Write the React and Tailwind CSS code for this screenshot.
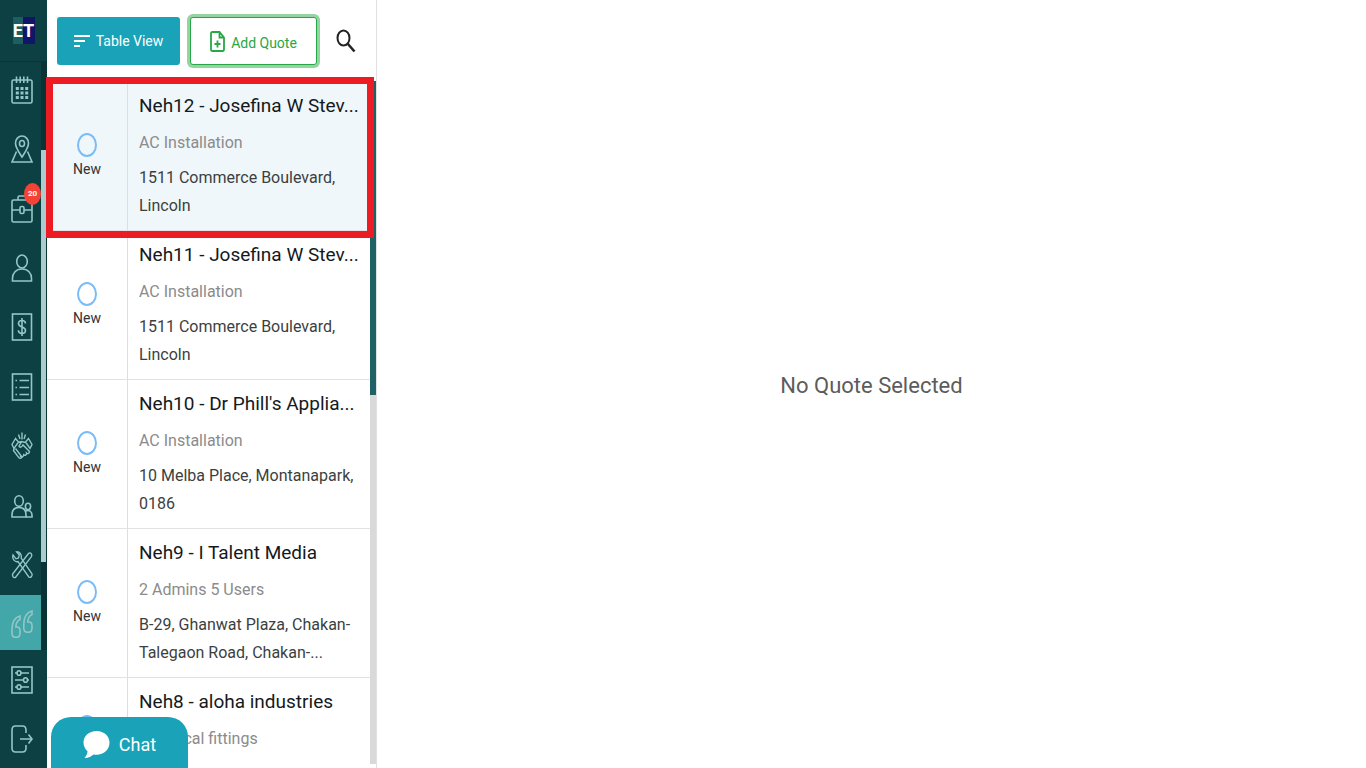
import React from "react";

const stroke = { fill: "none", stroke: "currentColor", strokeWidth: 1.6 };

function Icon({ children }) {
  return (
    <svg className="h-7 w-[22px]" viewBox="0 0 22 28" aria-hidden="true" {...stroke}>
      {children}
    </svg>
  );
}

const navItems = [
  {
    label: "Calendar",
    icon: (
      <Icon>
        <rect x="1" y="4" width="20" height="23" rx="1.5" />
        <path d="M5.5 0.500v6.500M9.200 0.500v6.500M12.800 0.500v6.500M16.500 0.500v6.500" />
        <path d="M4.800 12.500h3M9.500 12.500h3M14.200 12.500h3M4.800 17h3M9.500 17h3M14.200 17h3M4.800 21.500h3M9.500 21.500h3M14.200 21.500h3" strokeWidth="2.800" />
      </Icon>
    ),
  },
  {
    label: "Map",
    icon: (
      <Icon>
        <path d="M11 22C7.500 16.500 4.500 12.500 4.500 8.200a6.500 7.200 0 0 1 13 0C17.500 12.500 14.500 16.500 11 22z" />
        <ellipse cx="11" cy="8.500" rx="2.500" ry="3" />
        <path d="M5.500 16.500 1 27h20l-4.500-10.500" />
      </Icon>
    ),
  },
  {
    label: "Jobs",
    badge: "20",
    icon: (
      <Icon>
        <rect x="1" y="5" width="20" height="22" rx="1.500" />
        <path d="M7 5V2.500Q7 1 8.500 1h5Q15 1 15 2.500V5M1 15h8M13 15h8" />
        <rect x="9" y="11.500" width="4" height="7" rx="1.500" />
      </Icon>
    ),
  },
  {
    label: "Customers",
    icon: (
      <Icon>
        <ellipse cx="11" cy="7.500" rx="5.300" ry="6.500" />
        <path d="M1.500 27v-2.500C1.500 19 5 15 11 15s9.500 4 9.500 9.500V27z" />
      </Icon>
    ),
  },
  {
    label: "Invoices",
    icon: (
      <Icon>
        <rect x="1.500" y="1" width="19" height="26" />
        <path d="M14.500 10.500C14.300 8.500 13 7.500 11 7.500S7.500 8.700 7.500 10.600c0 4.400 7 2.400 7 6.700 0 2-1.400 3.200-3.500 3.200s-3.500-1-3.700-3.200M11 5v18" />
      </Icon>
    ),
  },
  {
    label: "Reports",
    icon: (
      <Icon>
        <rect x="1.500" y="1" width="19" height="26" />
        <path d="M4.500 7.500h1.500M8.500 7.500h9.500M4.500 14.500h1.500M8.500 14.500h9.500M4.500 21.500h1.500M8.500 21.500h9.500" />
      </Icon>
    ),
  },
  {
    label: "Partners",
    icon: (
      <Icon>
        <g strokeWidth="1.400">
          <path d="M11 0.500v7M7.500 2.500 9 7M14.500 2.500 13 7" />
          <path d="M4.500 6.500 1 12.500l2 4 4.500-6.500zM17.500 6.500 21 12.500l-2 4-4.500-6.500z" />
          <path d="M7.300 10.500l3-1 4.200 1M10.500 9.800 8 14c.5 2 2.500 1.500 4-1l6.500 6.500c-.2 2.300-2 2.500-3 1.500.2 2-1.500 2.800-2.800 1.800-.2 2.200-2.200 2.700-3.700 1" />
          <path d="M3 16.500l-.5 2 5.500 7.300q1.500 1.500 3-.8l-6.500-8.500" />
        </g>
      </Icon>
    ),
  },
  {
    label: "Users",
    icon: (
      <Icon>
        <ellipse cx="8" cy="9" rx="4.300" ry="5.300" />
        <path d="M1 25v-2c0-4.500 2.500-7.500 7-7.500s7 3 7 7.500v2z" />
        <ellipse cx="17" cy="14.500" rx="2.600" ry="3.200" />
        <path d="M14.500 19.200c3.500-2 6.500.4 6.500 3.800v2h-6" />
      </Icon>
    ),
  },
  {
    label: "Tools",
    icon: (
      <Icon>
        <g strokeWidth="1.350">
          <path d="M2 4l3 3.800 2.500-.8.800-3L5.500.8C8.500.5 11 3.500 10.200 7.200L20.800 22.500c1 2-1 4.800-3 3.500L7 10.500C4 11.600.8 8 2 4z" />
          <path d="M2 22.500 17.500 2.500c.8-1 2-.8 2.700.2.700 1 .7 2.200 0 3.200L4.800 26c-.8 1-2 .8-2.700-.2-.7-1-.8-2.300-.1-3.300z" />
        </g>
      </Icon>
    ),
  },
  {
    label: "Quotes",
    active: true,
    icon: (
      <Icon>
        <path d="M9 6C4 7.500 1 12.500 1 19v4q0 4.300 3.500 4.300h1Q9 27.300 9 23v-2.500Q9 17 6 17H4.800C5 13 6.500 10.500 9 9.500z" />
        <path d="M21 1C16 2.500 12.800 7.500 12.800 14v4q0 4.300 3.500 4.300h1.200q3.500 0 3.500-4.300v-2.500Q21 12 18 12h-1.300C17 8 18.500 5.500 21 4.500z" />
      </Icon>
    ),
  },
];

const footerItems = [
  {
    label: "Settings",
    icon: (
      <Icon>
        <rect x="1" y="1" width="20" height="26" />
        <path d="M4 7h2M10 7h8M4 14h8.500M16.500 14H18M4 21h2M10 21h8" />
        <ellipse cx="8" cy="7" rx="2" ry="2.300" />
        <ellipse cx="14.500" cy="14" rx="2" ry="2.300" />
        <ellipse cx="8" cy="21" rx="2" ry="2.300" />
      </Icon>
    ),
  },
  {
    label: "Log out",
    icon: (
      <Icon>
        <path d="M15 8V5q0-4-3.500-4h-7Q1 1 1 5v18q0 4 3.500 4h7q3.500 0 3.500-4v-3M9 14h12M17.500 9.500l3.500 4.500-3.500 4.500" />
      </Icon>
    ),
  },
];

const quotes = [
  { title: "Neh12 - Josefina W Stev...", service: "AC Installation", address: ["1511 Commerce Boulevard,", "Lincoln"], selected: true },
  { title: "Neh11 - Josefina W Stev...", service: "AC Installation", address: ["1511 Commerce Boulevard,", "Lincoln"] },
  { title: "Neh10 - Dr Phill's Applia...", service: "AC Installation", address: ["10 Melba Place, Montanapark,", "0186"] },
  { title: "Neh9 - I Talent Media", service: "2 Admins 5 Users", address: ["B-29, Ghanwat Plaza, Chakan-", "Talegaon Road, Chakan-..."] },
  { title: "Neh8 - aloha industries", service: "Electrical fittings", address: [] },
];

function NavLink({ item, className }) {
  return (
    <a
      href="#"
      aria-label={item.label}
      className={`relative flex items-center justify-center pl-[3px] text-[#93c6c7] ${className} ${item.active ? "bg-[#43a6a9] pt-1" : ""}`}
    >
      {item.icon}
      {item.badge && (
        <span className="absolute top-1 right-0 flex h-[22px] w-[17px] items-center justify-center rounded-[50%] bg-[#f44336] text-[8px] font-bold text-white">
          {item.badge}
        </span>
      )}
    </a>
  );
}

function Sidebar() {
  return (
    <nav className="flex w-[47px] shrink-0 flex-col bg-[#0d4043]">
      <div className="-mb-[2px] flex h-[62px] shrink-0 items-center justify-center border-b border-[#093538]">
        <div className="h-[27px] w-[22px] bg-linear-to-r from-[#1d5e62] from-45% to-[#101566] to-45% text-center text-lg leading-[27px] font-bold text-white">
          ET
        </div>
      </div>
      <div className="flex min-h-0 flex-1">
        <div className="flex flex-1 flex-col">
          {navItems.map((item) => (
            <NavLink key={item.label} item={item} className={item.active ? "h-[55px] shrink-0" : "min-h-0 flex-1"} />
          ))}
        </div>
        <div className="mt-[2px] flex w-[6px] flex-col bg-[#0a3336] py-[88px]">
          <div className="w-[5px] flex-1 bg-[#abcbce]" />
        </div>
      </div>
      <div className="pr-[6px]">
        {footerItems.map((item) => (
          <NavLink key={item.label} item={item} className="h-[59px]" />
        ))}
      </div>
    </nav>
  );
}

function Toolbar() {
  return (
    <div className="flex h-[82px] shrink-0 items-start pt-[17px] pl-[10px]">
      <button type="button" className="flex h-12 w-[123px] items-center justify-center gap-[6px] rounded-[3px] bg-[#19a2b8] text-sm text-white">
        <svg className="h-3 w-4" viewBox="0 0 16 12" fill="none" stroke="currentColor" strokeWidth="2" aria-hidden="true">
          <path d="M0 1h16M0 6h11M0 11h6" />
        </svg>
        Table View
      </button>
      <button type="button" className="ml-[10px] flex h-12 w-[127px] items-center justify-center gap-[6px] rounded-[3px] border border-[#28a745] bg-white pt-1 text-sm text-[#28a745] ring-3 ring-[#94d3a2]">
        <svg className="-mt-1 h-[21px] w-[15px]" viewBox="0 0 15 21" fill="none" stroke="currentColor" strokeWidth="1.800" aria-hidden="true">
          <path d="M9.500 1H2.500Q1 1 1 2.800v15.400Q1 20 2.500 20h10q1.500 0 1.500-1.800V6.500zM9.500 1v5.500H14" />
          <path d="M7.500 9.500v7M4.500 13h6" />
        </svg>
        Add Quote
      </button>
      <button type="button" aria-label="Search" className="mt-3 ml-[19px] text-[#222]">
        <svg className="h-6 w-5" viewBox="0 0 20 24" fill="none" stroke="currentColor" aria-hidden="true">
          <ellipse cx="7.500" cy="9" rx="6" ry="7.500" strokeWidth="2" />
          <path d="M11.500 14.500 18.500 22.500" strokeWidth="2.600" />
        </svg>
      </button>
    </div>
  );
}

function QuoteRow({ quote }) {
  const height = quote.address.length > 0 ? "h-[149px]" : "h-[121px]";
  return (
    <li className={`relative flex shrink-0 border-b border-[#e2e2e2] ${height} ${quote.selected ? "bg-[#eff7fa]" : "bg-white"}`}>
      <div className="flex w-20 shrink-0 flex-col items-center justify-center text-sm leading-5 text-[#333]">
        <span className="h-6 w-5 rounded-[50%] border-2 border-[#7bbcf8]" />
        <span className="mt-[2px]">New</span>
      </div>
      <div className="min-w-0 flex-1 border-l border-[#dedede] pt-2 pl-[11px] whitespace-nowrap">
        <h2 className="text-[19px] leading-8 text-[#15191c]">{quote.title}</h2>
        <p className="mt-[7px] text-base leading-7 text-[#8b8b8b]">{quote.service}</p>
        <div className="mt-[7px] text-base leading-7 text-[#3c3f41]">
          {quote.address.map((line) => (
            <p key={line}>{line}</p>
          ))}
        </div>
      </div>
      {quote.selected && (
        <div className="absolute -top-[5px] -right-[4px] -bottom-[8px] -left-px z-10 border-[7px] border-[#ed1c24]" />
      )}
    </li>
  );
}

export default function App() {
  return (
    <div className="flex h-screen overflow-hidden bg-white font-['Roboto','Open_Sans',sans-serif]">
      <Sidebar />
      <section className="relative flex w-[330px] shrink-0 flex-col border-r border-[#e0e0e0]">
        <Toolbar />
        <div className="-mt-px flex min-h-0 flex-1">
          <ul className="flex min-w-0 flex-1 flex-col pt-px">
            {quotes.map((quote) => (
              <QuoteRow key={quote.title} quote={quote} />
            ))}
          </ul>
          <div className="mb-1 w-[6px] shrink-0 bg-[#d9d9d9]">
            <div className="h-[46%] bg-[#1f6265]" />
          </div>
        </div>
        <button type="button" className="absolute bottom-0 left-1 z-20 flex h-[51px] w-[137px] items-center justify-center gap-[9px] rounded-t-[20px] bg-[#19a2b8] pt-1 text-lg text-white">
          <svg className="h-[27px] w-[27px]" viewBox="0 0 27 27" fill="currentColor" aria-hidden="true">
            <path d="M13.500 0C6 0 .500 5 .500 11.500c0 3.500 1.600 6.600 4 8.700C4.500 23 3 25 1.500 27c4 0 7-1.800 9-3.500 9 1.500 16-4 16-12C26.500 5 21 0 13.500 0z" />
          </svg>
          Chat
        </button>
      </section>
      <main className="flex min-w-0 flex-1 items-center justify-center pt-[2px] text-[22px] text-[#5c5c5c]">
        <p>No Quote Selected</p>
      </main>
    </div>
  );
}
